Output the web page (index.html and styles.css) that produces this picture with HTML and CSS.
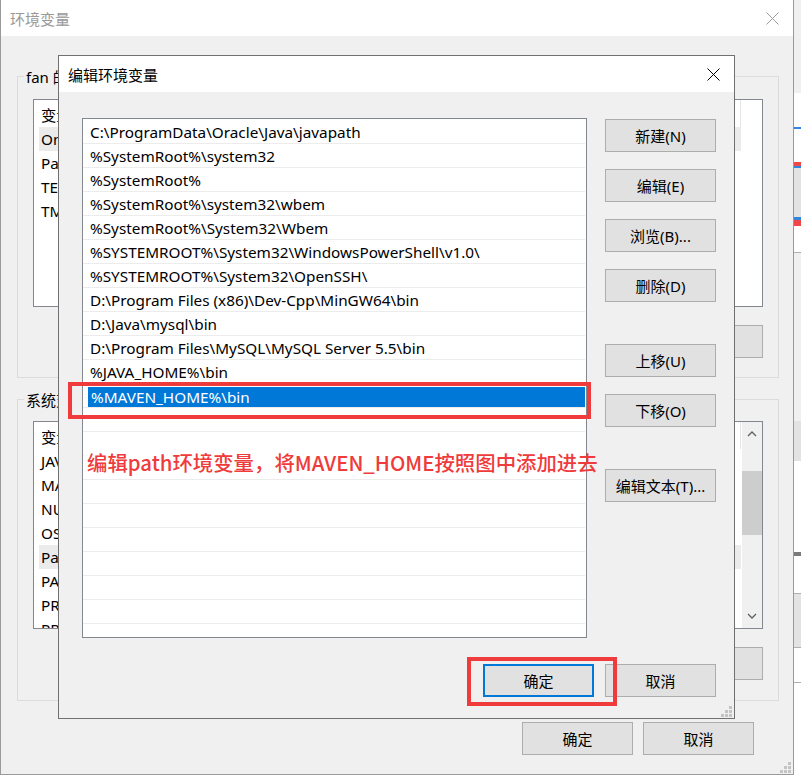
FILE: index.html
```html
<!DOCTYPE html>
<html lang="zh-CN">
<head>
<meta charset="UTF-8">
<title>编辑环境变量</title>
<link rel="stylesheet" href="styles.css">
</head>
<body>

<div class="desktop">

	<!-- window behind, only a sliver shows on the right -->
	<div class="side-win">
		<div class="s s-top"></div>
		<div class="s s-white h34"></div>
		<div class="s s-blue h2"></div>
		<div class="s s-white h33"></div>
		<div class="s s-red h4"></div>
		<div class="s s-blue h2"></div>
		<div class="s s-grey h49"></div>
		<div class="s s-blue h3"></div>
		<div class="s s-red h6"></div>
		<div class="s s-white h26"></div>
		<div class="s s-line"></div>
		<div class="s s-body h168"></div>
		<div class="s s-grey h40"></div>
		<div class="s s-white h91"></div>
		<div class="s s-dark h4"></div>
		<div class="s s-white h37"></div>
		<div class="s s-line"></div>
		<div class="s s-grey h53"></div>
		<div class="s s-line"></div>
		<div class="s s-white h34"></div>
		<div class="s s-line"></div>
	</div>

	<div class="win bg-win">
		<div class="titlebar">
			<span class="title">环境变量</span>
			<svg class="x" width="13" height="13" viewBox="0 0 13 13"><path d="M0.5 0.5L12.5 12.5M12.5 0.5L0.5 12.5" stroke="#9a9a9a" stroke-width="1" fill="none"/></svg>
		</div>
		<div class="bg-body">
			<div class="group group-user">
				<span class="group-label">fan 的用户变量(U)</span>
				<div class="varlist">
					<div class="vcol">
						<div class="vhead"><span class="vname">变量</span><span>值</span></div>
						<div class="vrow sel"><span class="vname">OneDrive</span><span>C:\Users\fan\OneDrive</span></div>
						<div class="vrow"><span class="vname">Path</span><span>C:\Users\fan\AppData\Local\Microsoft\WindowsApps;</span></div>
						<div class="vrow"><span class="vname">TEMP</span><span>C:\Users\fan\AppData\Local\Temp</span></div>
						<div class="vrow"><span class="vname">TMP</span><span>C:\Users\fan\AppData\Local\Temp</span></div>
					</div>
				</div>
				<div class="btnrow">
					<div class="btn">新建(N)...</div>
					<div class="btn">编辑(E)...</div>
					<div class="btn">删除(D)</div>
				</div>
			</div>

			<div class="group group-sys">
				<span class="group-label">系统变量(S)</span>
				<div class="varlist">
					<div class="vcol">
						<div class="vhead"><span class="vname">变量</span><span>值</span></div>
						<div class="vrow"><span class="vname">JAVA_HOME</span><span>D:\Java\jdk1.8.0_201</span></div>
						<div class="vrow"><span class="vname">MAVEN_HOME</span><span>D:\apache-maven-3.6.0</span></div>
						<div class="vrow"><span class="vname">NUMBER_OF_PROCESSORS</span><span>8</span></div>
						<div class="vrow"><span class="vname">OS</span><span>Windows_NT</span></div>
						<div class="vrow sel"><span class="vname">Path</span><span>C:\ProgramData\Oracle\Java\javapath;</span></div>
						<div class="vrow"><span class="vname">PATHEXT</span><span>.COM;.EXE;.BAT;.CMD;.VBS</span></div>
						<div class="vrow"><span class="vname">PROCESSOR_ARCHITECTURE</span><span>AMD64</span></div>
						<div class="vrow"><span class="vname">PROCESSOR_IDENTIFIER</span><span>Intel64 Family 6</span></div>
					</div>
					<div class="vscroll">
						<div class="arrow"><svg width="10" height="6" viewBox="0 0 10 6"><path d="M1 5L5 1L9 5" stroke="#606060" stroke-width="1.3" fill="none"/></svg></div>
						<div class="thumb"></div>
						<div class="arrow arrow-down"><svg width="10" height="6" viewBox="0 0 10 6"><path d="M1 1L5 5L9 1" stroke="#606060" stroke-width="1.3" fill="none"/></svg></div>
					</div>
				</div>
				<div class="btnrow">
					<div class="btn">新建(W)...</div>
					<div class="btn">编辑(I)...</div>
					<div class="btn">删除(L)</div>
				</div>
			</div>

			<div class="footer">
				<div class="btn">确定</div>
				<div class="btn">取消</div>
			</div>
		</div>
		<svg class="grip" width="11" height="11" viewBox="0 0 11 11"><g fill="#c4c4c4"><rect x="8" y="0" width="3" height="3"/><rect x="4" y="4" width="3" height="3"/><rect x="8" y="4" width="3" height="3"/><rect x="0" y="8" width="3" height="3"/><rect x="4" y="8" width="3" height="3"/><rect x="8" y="8" width="3" height="3"/></g></svg>
	</div>

	<div class="win dlg">
		<div class="titlebar">
			<span class="title">编辑环境变量</span>
			<svg class="x" width="13" height="13" viewBox="0 0 13 13"><path d="M0.5 0.5L12.5 12.5M12.5 0.5L0.5 12.5" stroke="#000" stroke-width="1" fill="none"/></svg>
		</div>
		<div class="dlg-body">
			<div class="dlg-main">
				<div class="plist">
					<div class="prow">C:\ProgramData\Oracle\Java\javapath</div>
					<div class="prow">%SystemRoot%\system32</div>
					<div class="prow">%SystemRoot%</div>
					<div class="prow">%SystemRoot%\system32\wbem</div>
					<div class="prow">%SystemRoot%\System32\Wbem</div>
					<div class="prow">%SYSTEMROOT%\System32\WindowsPowerShell\v1.0\</div>
					<div class="prow">%SYSTEMROOT%\System32\OpenSSH\</div>
					<div class="prow">D:\Program Files (x86)\Dev-Cpp\MinGW64\bin</div>
					<div class="prow">D:\Java\mysql\bin</div>
					<div class="prow">D:\Program Files\MySQL\MySQL Server 5.5\bin</div>
					<div class="prow">%JAVA_HOME%\bin</div>
					<div class="prow edit"><span class="edit-box">%MAVEN_HOME%\bin</span></div>
					<div class="prow"></div>
					<div class="prow"></div>
					<div class="prow"></div>
					<div class="prow"></div>
					<div class="prow"></div>
					<div class="prow"></div>
					<div class="prow"></div>
					<div class="prow"></div>
					<div class="prow"></div>
					<div class="prow"></div>
				</div>
				<div class="side">
					<div class="btn">新建(N)</div>
					<div class="btn">编辑(E)</div>
					<div class="btn">浏览(B)...</div>
					<div class="btn">删除(D)</div>
					<div class="btn gap">上移(U)</div>
					<div class="btn">下移(O)</div>
					<div class="btn gap">编辑文本(T)...</div>
				</div>
			</div>
			<div class="footer">
				<div class="btn default">确定</div>
				<div class="btn">取消</div>
			</div>
		</div>
		<svg class="grip" width="11" height="11" viewBox="0 0 11 11"><g fill="#c4c4c4"><rect x="8" y="0" width="3" height="3"/><rect x="4" y="4" width="3" height="3"/><rect x="8" y="4" width="3" height="3"/><rect x="0" y="8" width="3" height="3"/><rect x="4" y="8" width="3" height="3"/><rect x="8" y="8" width="3" height="3"/></g></svg>
	</div>

	<!-- annotations drawn over the screenshot -->
	<div class="note">编辑path环境变量，将MAVEN_HOME按照图中添加进去</div>
	<div class="mark mark-row"></div>
	<div class="mark mark-ok"></div>
</div>

</body>
</html>
```

FILE: styles.css
```css
* {
	box-sizing: border-box;
	margin: 0;
	padding: 0;
}
html, body {
	background: #f0f0f0;
	color: #000;
}
body {
	font-family: "Noto Sans", "Noto Sans CJK SC", sans-serif;
	font-size: 14px;
	overflow: hidden;
}
.desktop {
	position: relative;
	width: 801px;
	height: 775px;
	overflow: hidden;
}

/* sliver of another window */
.side-win {
	position: absolute;
	left: 794px;
	top: 0;
	width: 7px;
	height: 775px;
	display: flex;
	flex-direction: column;
	background: #fff;
}
.s { flex: none; }
.s-top { height: 93px; background: #f0f0f0; }
.s-white { background: #fff; }
.s-blue { background: #2f86dc; }
.s-red { background: #f04848; }
.s-grey { background: #e3e3e3; }
.s-body { background: #f0f0f0; }
.s-dark { background: #7a7a7a; }
.s-line { height: 1px; background: #b0b0b0; }
.h2 { height: 2px; } .h3 { height: 3px; } .h4 { height: 4px; } .h6 { height: 6px; }
.h26 { height: 26px; } .h33 { height: 33px; } .h34 { height: 34px; } .h37 { height: 37px; }
.h40 { height: 40px; } .h49 { height: 49px; } .h53 { height: 53px; } .h91 { height: 91px; }
.h168 { height: 168px; }

/* windows */
.win {
	position: absolute;
	display: flex;
	flex-direction: column;
	background: #f0f0f0;
}
.titlebar {
	flex: none;
	height: 36px;
	background: #fff;
	display: flex;
	align-items: center;
	justify-content: space-between;
	font-family: "Noto Sans CJK SC", sans-serif;
	font-size: 15px;
}
.grip {
	position: absolute;
	right: 2px;
	bottom: 1px;
}

.bg-win {
	left: 0;
	top: 0;
	width: 794px;
	height: 775px;
	border-left: 1px solid #9a9a9a;
	border-right: 1px solid #9a9a9a;
	border-bottom: 1px solid #9a9a9a;
}
.bg-win .titlebar {
	padding: 0 14px 0 9px;
}
.bg-win .title {
	color: #999;
}
.bg-body {
	padding: 40px 14px 0 16px;
	display: flex;
	flex-direction: column;
}
.group {
	position: relative;
	border: 1px solid #dcdcdc;
}
.group-user {
	padding: 22px 15px 19px;
}
.group-sys {
	margin-top: 21px;
	padding: 21px 15px 20px;
}
.group-label {
	position: absolute;
	left: 6px;
	top: -10px;
	padding: 0 2px;
	line-height: 20px;
	font-size: 15px;
	background: #f0f0f0;
	white-space: nowrap;
}
.varlist {
	height: 208px;
	border: 1px solid #828790;
	background: #fff;
	overflow: hidden;
	display: flex;
	font-size: 15.3px;
}
.vcol {
	flex: 1;
	min-width: 0;
	display: flex;
	flex-direction: column;
	padding-right: 21px;
}
.varlist .vcol:not(:only-child) {
	padding-right: 1px;
}
.vhead, .vrow {
	flex: none;
	margin-left: 5px;
	display: flex;
	align-items: center;
	white-space: nowrap;
	overflow: hidden;
}
.vhead {
	height: 27px;
	border-right: 1px solid #e5e5e5;
}
.vrow {
	height: 24px;
}
.vrow.sel {
	background: #ebebeb;
}
.vname {
	flex: none;
	width: 210px;
	padding-left: 2px;
}
.vscroll {
	flex: none;
	width: 20px;
	background: #f0f0f0;
	display: flex;
	flex-direction: column;
}
.arrow {
	height: 24px;
	display: flex;
	align-items: center;
	justify-content: center;
}
.arrow-down {
	margin-top: auto;
}
.thumb {
	margin-top: 25px;
	height: 64px;
	background: #cdcdcd;
}

.btn {
	flex: none;
	width: 111px;
	height: 33px;
	background: #e1e1e1;
	border: 1px solid #adadad;
	display: flex;
	align-items: center;
	justify-content: center;
	font-size: 15px;
	white-space: nowrap;
}
.btn.default {
	border: 2px solid #0078d7;
}
.btnrow {
	margin-top: 18px;
	display: flex;
	justify-content: flex-end;
	gap: 11px;
}
.bg-body > .footer {
	margin-top: 21px;
	padding-right: 25px;
	display: flex;
	justify-content: flex-end;
	gap: 10px;
}

/* edit dialog */
.dlg {
	left: 58px;
	top: 55px;
	width: 677px;
	height: 664px;
	border: 1px solid #707070;
}
.dlg .titlebar {
	padding: 0 14px 0 9px;
}
.dlg-body {
	padding: 26px 18px 0 23px;
}
.dlg-main {
	display: flex;
}
.plist {
	flex: none;
	width: 505px;
	height: 520px;
	padding-top: 1px;
	border: 1px solid #828790;
	background: #fff;
	overflow: hidden;
	font-size: 15.3px;
}
.prow {
	height: 24px;
	margin-right: 1px;
	padding-left: 7px;
	border-bottom: 1px solid #ececec;
	display: flex;
	align-items: center;
	white-space: nowrap;
}
.prow.edit {
	padding-left: 5px;
	align-items: flex-start;
}
.edit-box {
	flex: 1;
	height: 20px;
	margin-top: 3px;
	padding-left: 3px;
	background: #0078d7;
	color: #fff;
	display: flex;
	align-items: center;
}
.side {
	margin-left: 18px;
	padding-top: 1px;
	display: flex;
	flex-direction: column;
	gap: 17px;
}
.side .gap {
	margin-top: 25px;
}
.dlg-body > .footer {
	margin-top: 26px;
	display: flex;
	justify-content: flex-end;
	gap: 11px;
}

/* annotations */
.note {
	position: absolute;
	left: 84px;
	top: 446px;
	width: 500px;
	height: 32px;
	padding-left: 3px;
	line-height: 32px;
	background: #fff;
	color: #ef3b3b;
	font-family: "Noto Sans CJK SC", sans-serif;
	font-size: 20.4px;
	font-weight: 500;
	white-space: nowrap;
}
.mark {
	position: absolute;
	border: 4px solid #ef3b3b;
}
.mark-row {
	left: 68px;
	top: 382px;
	width: 523px;
	height: 37px;
}
.mark-ok {
	left: 467px;
	top: 657px;
	width: 150px;
	height: 49px;
}
```
